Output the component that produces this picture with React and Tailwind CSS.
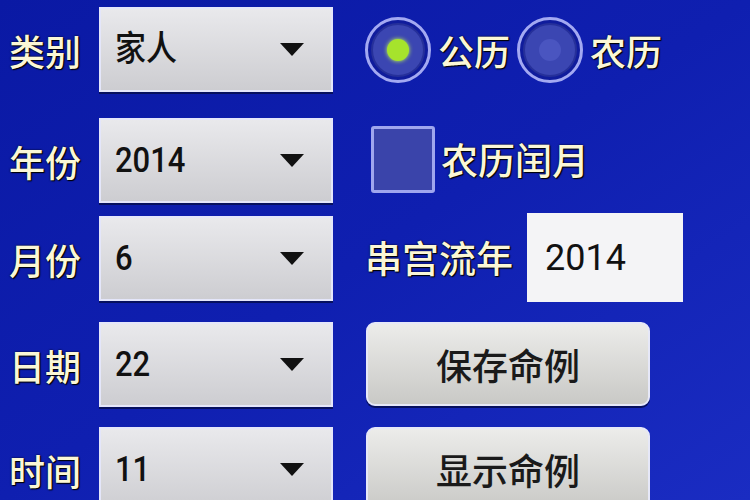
import React from "react";

const font = { fontFamily: '"Noto Sans CJK SC", sans-serif' };

function Label({ children }) {
  return (
    <div className="w-[99px] pl-[9px] text-[36px] font-medium leading-none text-[#fbf7d6] [text-shadow:0_0_2px_#000,1px_1px_1px_#000]">
      {children}
    </div>
  );
}

function Spinner({ value }) {
  return (
    <div className="flex h-[85px] w-[234px] items-center justify-between border-2 border-[#e4e6fa] bg-gradient-to-b from-[#e9e9ec] to-[#cdcdd1] pl-[14px] pr-[26px] shadow-[0_2px_0_#06105e]">
      <span className="inline-block origin-left scale-y-[1.12] text-[31px] font-medium leading-none text-[#111] font-['Roboto','Noto_Sans_CJK_SC',sans-serif]">{value}</span>
      <svg width="26" height="15" viewBox="0 0 26 15">
        <polygon points="1,1 25,1 13,14" fill="#111" />
      </svg>
    </div>
  );
}

function Radio({ checked }) {
  return (
    <div className="flex h-[66px] w-[66px] items-center justify-center rounded-full border-[3px] border-[#a3a9f2] bg-[#101c9c] p-[3px]">
      <div className="flex h-full w-full items-center justify-center rounded-full border-2 border-[#26309a] bg-[#3b46b2]">
        {checked ? (
          <div className="h-[22px] w-[22px] rounded-full bg-[#a6e32c] shadow-[0_0_4px_#c8ff50]" />
        ) : (
          <div className="h-[22px] w-[22px] rounded-full bg-[#4a55c0]" />
        )}
      </div>
    </div>
  );
}

function Button({ children }) {
  return (
    <div className="flex h-[84px] w-[284px] items-center justify-center rounded-[9px] border-2 border-[#e6e8f8] bg-gradient-to-b from-[#ececea] to-[#c9c9c6] text-[36px] font-medium leading-none text-[#1a1a1a] shadow-[0_2px_0_#06105e]">
      {children}
    </div>
  );
}

const yellow = "text-[#fbf7d6] font-medium [text-shadow:0_0_2px_#000,1px_1px_1px_#000]";

export default function App() {
  return (
    <div
      style={font}
      className="flex h-[500px] w-[750px] overflow-hidden bg-gradient-to-br from-[#0a19a4] via-[#0f1fb0] to-[#1a2cc2]"
    >
      <div className="flex w-[365px] flex-col pt-[7px]">
        <div className="flex items-center">
          <Label>类别</Label>
          <Spinner value="家人" />
        </div>
        <div className="mt-[26px] flex items-center">
          <Label>年份</Label>
          <Spinner value="2014" />
        </div>
        <div className="mt-[13px] flex items-center">
          <Label>月份</Label>
          <Spinner value="6" />
        </div>
        <div className="mt-[21px] flex items-center">
          <Label>日期</Label>
          <Spinner value="22" />
        </div>
        <div className="mt-[20px] flex items-center">
          <Label>时间</Label>
          <Spinner value="11" />
        </div>
      </div>
      <div className="flex flex-col pt-[17px]">
        <div className="flex items-center">
          <Radio checked />
          <span className={"ml-[7px] text-[36px] leading-none " + yellow}>公历</span>
          <div className="ml-[7px]">
            <Radio />
          </div>
          <span className={"ml-[7px] text-[36px] leading-none " + yellow}>农历</span>
        </div>
        <div className="mt-[43px] flex items-center pl-[6px]">
          <div className="h-[67px] w-[64px] rounded-[3px] border-[3px] border-[#9fa6ee] bg-[#3a44aa]" />
          <span className={"ml-[6px] text-[37px] leading-none " + yellow}>农历闰月</span>
        </div>
        <div className="mt-[20px] flex items-center">
          <span className={"text-[37px] leading-none " + yellow}>串宫流年</span>
          <div className="ml-[14px] flex h-[89px] w-[156px] items-center bg-[#f4f4f6] pl-[18px] text-[36px] leading-none text-[#111] font-['Roboto','Noto_Sans_CJK_SC',sans-serif]">
            2014
          </div>
        </div>
        <div className="mt-[20px] pl-[1px]">
          <Button>保存命例</Button>
        </div>
        <div className="mt-[21px] pl-[1px]">
          <Button>显示命例</Button>
        </div>
      </div>
    </div>
  );
}
